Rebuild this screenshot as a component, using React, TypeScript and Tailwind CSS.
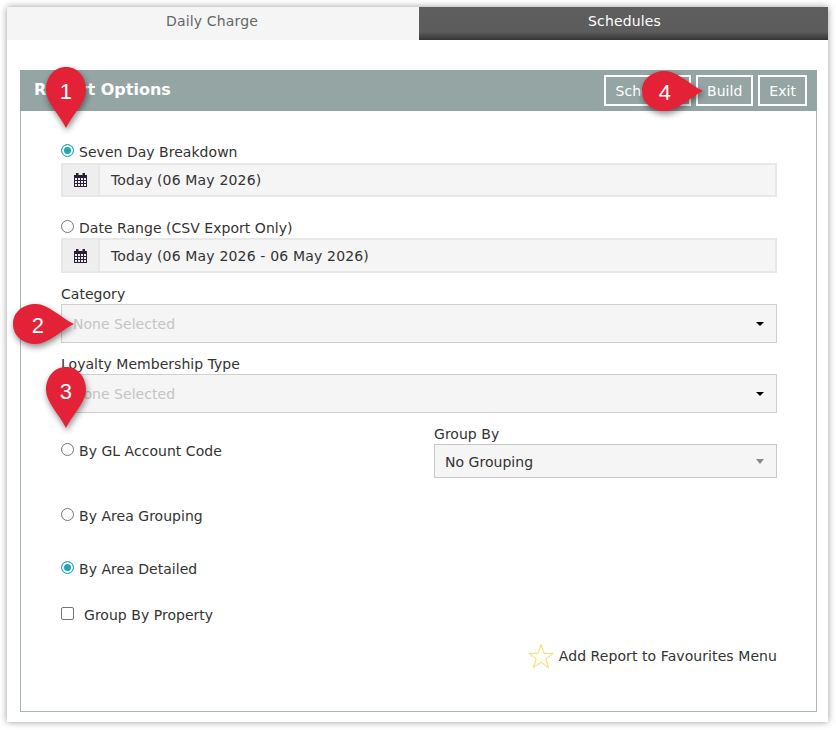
const font = "[font-family:'DejaVu_Sans',Verdana,sans-serif]";

function CalendarIcon() {
  return (
    <svg width="13" height="14" viewBox="0 0 13 14" fill="none" stroke="#2b1f33" strokeWidth="1">
      <rect x="0.5" y="2.5" width="12" height="11" />
      <rect x="0.5" y="2.5" width="12" height="2" fill="#2b1f33" />
      <path d="M3.5 5v8M6.5 5v8M9.5 5v8M1 7.5h11M1 10.5h11" />
      <rect x="2.5" y="0.5" width="1.5" height="3" fill="#2b1f33" />
      <rect x="9" y="0.5" width="1.5" height="3" fill="#2b1f33" />
    </svg>
  );
}

function Star() {
  return (
    <svg width="26" height="26" viewBox="0 0 26 26" fill="#fffef4" stroke="#f5d96a" strokeWidth="1">
      <path d="M13 1.5l3 8.8h9.2l-7.4 5.5 2.8 8.8L13 19.3l-7.6 5.3 2.8-8.8L.8 10.3H10z" />
    </svg>
  );
}

function Radio({ checked, label }: { checked?: boolean; label: string }) {
  return (
    <label className="flex items-center h-5 gap-[5px]">
      <input
        type="radio"
        readOnly
        checked={!!checked}
        className="appearance-none shrink-0 w-[13px] h-[13px] -mt-[3px] rounded-full border border-[#767676] bg-white checked:border-[#1fa6b8] checked:bg-[#1fa6b8] checked:shadow-[inset_0_0_0_2px_white]"
      />
      <span>{label}</span>
    </label>
  );
}

function DateField({ value, height, valueClass }: { value: string; height: string; valueClass?: string }) {
  return (
    <div className={`flex border-2 border-[#e8e8e8] bg-[#f5f5f5] ${height}`}>
      <div className="w-[37px] shrink-0 flex items-center justify-center bg-[#eeeeee] border-r-2 border-[#e8e8e8]">
        <CalendarIcon />
      </div>
      <div className={`flex-1 flex items-center pl-[11px] tracking-[0.17px] ${valueClass ?? ""}`}>{value}</div>
    </div>
  );
}

function SelectBox({ value }: { value: string }) {
  return (
    <div className="flex items-center justify-between h-[39px] border border-[#cfcfcf] bg-[#f5f5f5] pl-[11px] pr-[12px]">
      <span className="pt-[2px] text-[#c4c4c4]">{value}</span>
      <span className="w-0 h-0 border-x-[4px] border-x-transparent border-t-[4px] border-t-black" />
    </div>
  );
}

function Pin({ n, side, className, digitClass }: { n: number; side: "down" | "right"; className: string; digitClass: string }) {
  const d = side === "down"
    ? "M20 0C32 0 40 10 40 23C40 35 27 47 20 61C13 47 0 35 0 23C0 10 8 0 20 0Z"
    : "M23 0C35 0 47 13 61 20C47 27 35 40 23 40C10 40 0 32 0 20C0 8 10 0 23 0Z";
  return (
    <div className={`absolute ${className}`}>
      <svg
        width={side === "down" ? 40 : 61}
        height={side === "down" ? 61 : 40}
        className="block overflow-visible drop-shadow-[1px_3px_3px_rgba(0,0,0,0.45)]"
      >
        <path d={d} fill="#e32237" />
      </svg>
      <span
        className={`absolute w-10 h-10 flex items-center justify-center text-white text-[22px] [font-family:'Liberation_Sans',Arial,sans-serif] ${digitClass}`}
      >
        {n}
      </span>
    </div>
  );
}

function HeadButton({ label }: { label: string }) {
  return (
    <button className="h-[31px] px-[9px] border-2 border-white text-white text-[14px] leading-none">
      {label}
    </button>
  );
}

export default function App() {
  return (
    <div className={`relative w-[836px] h-[730px] bg-white pt-[7px] pl-[7px] text-[14px] tracking-[0.03px] text-[#333333] ${font}`}>
      <div className="w-[821px] h-[715px] bg-white shadow-[0_0_7px_rgba(0,0,0,0.4)]">
        {/* Tabs */}
        <div className="flex h-[33px] tracking-[0.15px]">
          <div className="w-[412px] pb-[4px] pr-[2px] flex items-center justify-center bg-[#f5f5f5] text-[#666666]">Daily Charge</div>
          <div className="flex-1 pb-[4px] pl-[2px] flex items-center justify-center bg-[linear-gradient(#5e5e5e_0%,#5c5c5c_75%,#383434_100%)] text-white">
            Schedules
          </div>
        </div>

        {/* Report panel */}
        <div className="mt-[30px] ml-[13px] w-[797px] h-[642px] border border-t-0 border-[#a9b8b6] border-r-[#b5b5b5]">
          <div className="-ml-px -mr-px flex items-center justify-between h-[41px] bg-[#95a5a3] pl-[14px] pr-[10px]">
            <span className="pb-[2px] text-white text-[16px] font-bold tracking-normal">Report Options</span>
            <div className="flex gap-[5px]">
              <HeadButton label="Schedule" />
              <HeadButton label="Build" />
              <HeadButton label="Exit" />
            </div>
          </div>

          <div className="pl-[40px] pr-[39px] pt-[31px]">
            <Radio checked label="Seven Day Breakdown" />
            <div className="mt-[1px]">
              <DateField value="Today (06 May 2026)" height="h-[34px]" />
            </div>

            <div className="mt-[21px]">
              <Radio label="Date Range (CSV Export Only)" />
            </div>
            <DateField value="Today (06 May 2026 - 06 May 2026)" height="h-[35px]" valueClass="pt-[2px]" />

            <div className="mt-[11px] h-5 leading-5">Category</div>
            <SelectBox value="None Selected" />

            <div className="mt-[11px] h-5 leading-5">Loyalty Membership Type</div>
            <SelectBox value="None Selected" />

            <div className="mt-[11px] flex justify-between">
              <div className="pt-[17px]">
                <Radio label="By GL Account Code" />
              </div>
              <div className="w-[343px]">
                <div className="h-5 leading-5">Group By</div>
                <div className="flex items-center justify-between h-[34px] border border-[#c8c8c8] bg-[#f5f5f5] pl-[10px] pr-[12px]">
                  <span className="pt-[2px]">No Grouping</span>
                  <span className="w-0 h-0 border-x-[4px] border-x-transparent border-t-[5px] border-t-[#888888]" />
                </div>
              </div>
            </div>

            <div className="mt-[28px]">
              <Radio label="By Area Grouping" />
            </div>
            <div className="mt-[33px]">
              <Radio checked label="By Area Detailed" />
            </div>
            <label className="mt-[26px] flex items-center h-5 gap-[10px]">
              <input
                type="checkbox"
                readOnly
                className="appearance-none shrink-0 w-[13px] h-[13px] -mt-[3px] rounded-[2px] border border-[#767676] bg-white"
              />
              <span>Group By Property</span>
            </label>

            <div className="mt-[18px] flex items-center justify-end gap-[5px] h-[26px]">
              <Star />
              <span className="tracking-[0.08px]">Add Report to Favourites Menu</span>
            </div>
          </div>
        </div>
      </div>

      {/* Callout pins */}
      <Pin n={1} side="down" className="left-[46px] top-[67px]" digitClass="left-0 top-[4px]" />
      <Pin n={2} side="right" className="left-[13px] top-[304px]" digitClass="left-[5px] top-[1px]" />
      <Pin n={3} side="down" className="left-[46px] top-[367px]" digitClass="left-0 top-[4px]" />
      <Pin n={4} side="right" className="left-[642px] top-[71px]" digitClass="left-[3px] top-[1px]" />
    </div>
  );
}
